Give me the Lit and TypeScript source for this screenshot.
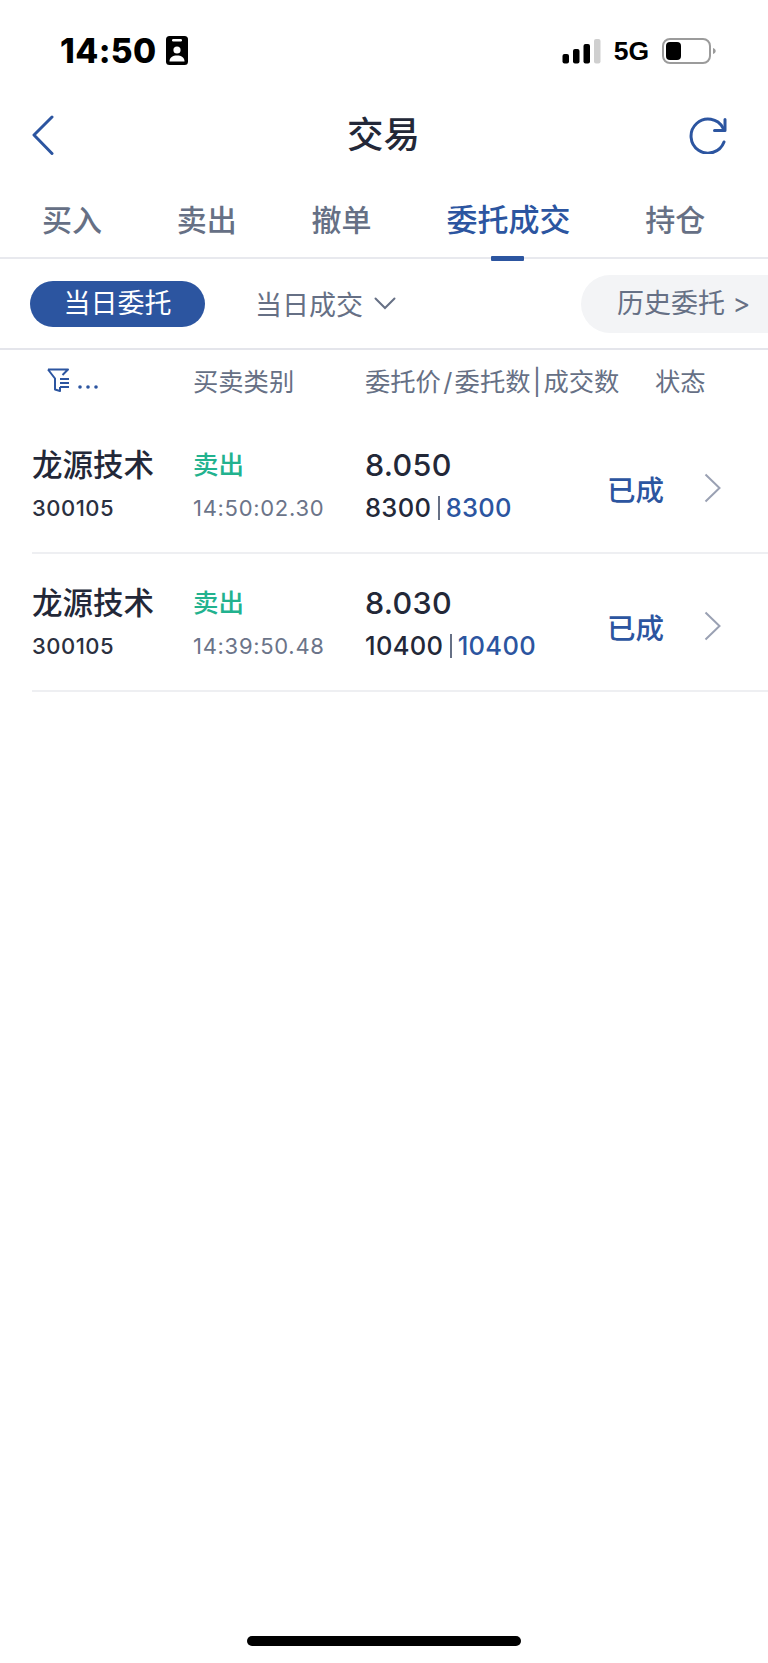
import { LitElement, html, css } from "lit";
import { customElement } from "lit/decorators.js";

const orders = [
  { name: "龙源技术", code: "300105", side: "卖出", time: "14:50:02.30", price: "8.050", qty: "8300", done: "8300", status: "已成" },
  { name: "龙源技术", code: "300105", side: "卖出", time: "14:39:50.48", price: "8.030", qty: "10400", done: "10400", status: "已成" },
];

@customElement("app-root")
export class AppRoot extends LitElement {
  static styles = css`
    :host {
      display: flex;
      flex-direction: column;
      width: 768px;
      height: 1663px;
      background: #fff;
      font-family: Inter, "Noto Sans CJK SC", sans-serif;
      color: #232838;
      overflow: hidden;
    }
    svg { display: block; flex: none; }
    .status {
      height: 100px;
      flex: none;
      box-sizing: border-box;
      padding: 36px 52px 0 60px;
      display: flex;
      align-items: flex-start;
      color: #000;
    }
    .clock { font-size: 33.5px; line-height: 30px; font-weight: 800; letter-spacing: 0.4px; width: 106px; }
    .status-right { margin-left: auto; display: flex; align-items: center; height: 30px; }
    .net { font-size: 26.5px; font-weight: 700; line-height: 30px; margin: 0 13px; font-family: "Liberation Sans", sans-serif; }
    .nav {
      height: 70px;
      flex: none;
      display: flex;
      align-items: center;
      justify-content: space-between;
      box-sizing: border-box;
      padding: 0 41px 0 32px;
    }
    .title {
      flex: 1;
      text-align: center;
      font-size: 36.5px;
      line-height: 50px;
      font-weight: 500;
      padding-left: 24px;
    }
    .tabs {
      flex: none;
      height: 89px;
      box-sizing: border-box;
      padding: 28px 0 0 42px;
      display: flex;
      gap: 74.8px;
      border-bottom: 2px solid #e8e9ee;
    }
    .tab {
      position: relative;
      font-size: 30px;
      line-height: 44px;
      font-weight: 500;
      color: #667085;
      white-space: nowrap;
      height: 61px;
    }
    .tab.active { color: #2c55a0; font-size: 31px; }
    .tab.active::after {
      content: "";
      position: absolute;
      left: 45px;
      bottom: -2px;
      width: 33px;
      height: 5px;
      background: #2c55a0;
      border-radius: 1px;
    }
    .filters {
      flex: none;
      height: 91px;
      box-sizing: border-box;
      padding-left: 30px;
      display: flex;
      align-items: center;
      border-bottom: 2px solid #e4e5eb;
    }
    .pill {
      width: 175px;
      height: 46px;
      border-radius: 23px;
      background: #2c55a0;
      color: #fff;
      font-size: 27px;
      line-height: 46px;
      text-align: center;
    }
    .drop {
      margin-left: 50px;
      font-size: 27px;
      color: #667085;
      display: flex;
      align-items: center;
      gap: 11px;
    }
    .history {
      margin-left: auto;
      width: 187px;
      height: 58px;
      border-radius: 29px 0 0 29px;
      background: #f3f4f6;
      color: #667085;
      font-size: 27px;
      line-height: 58px;
      box-sizing: border-box;
      padding-left: 36px;
      white-space: nowrap;
    }
    .head, .row {
      display: grid;
      grid-template-columns: 161px 172px 242px 1fr;
      margin-left: 32px;
    }
    .head {
      flex: none;
      height: 66px;
      box-sizing: border-box;
      padding-bottom: 6px;
      align-items: center;
      font-size: 25.3px;
      color: #667085;
      white-space: nowrap;
    }
    .head-filter { display: flex; align-items: center; gap: 8px; padding-left: 15px; color: #2c55a0; }
    .head-state { padding-left: 48px; }
    .row {
      flex: none;
      height: 138px;
      box-sizing: border-box;
      border-bottom: 2px solid #eeeff2;
      padding-top: 27px;
    }
    .row .first { line-height: 44px; height: 44px; }
    .row .second { line-height: 30px; margin-top: 6px; }
    .name { font-size: 30.5px; font-weight: 500; }
    .code { font-size: 22px; font-weight: 500; letter-spacing: 0.5px; color: #2b3040; }
    .side { font-size: 25.5px; color: #22b28e; font-weight: 500; }
    .time { font-size: 22px; color: #6b7489; letter-spacing: 0.7px; }
    .price { font-size: 30.5px; font-weight: 500; letter-spacing: 0.3px; }
    .qty { font-size: 25.5px; font-weight: 500; letter-spacing: 0.3px; display: flex; align-items: center; }
    .sep { width: 1.5px; height: 24px; background: #667085; margin: 0 6px 0 7px; }
    .done { color: #2c55a0; }
    .state {
      display: flex;
      align-items: center;
      justify-content: space-between;
      height: 90px;
      padding-right: 47px;
      font-size: 28.5px;
      font-weight: 500;
      color: #2c55a0;
    }
    .home {
      margin: auto auto 17px;
      width: 274px;
      height: 10px;
      border-radius: 5px;
      background: #000;
    }
  `;

  private chevronRight() {
    return html`<svg width="17" height="30" viewBox="0 0 17 30"><path d="M1.5 1.5 15.5 15 1.5 28.5" fill="none" stroke="#9aa1b3" stroke-width="2"/></svg>`;
  }

  render() {
    return html`
      <div class="status">
        <div class="clock">14:50</div>
        <svg width="22" height="29" viewBox="0 0 22 29">
          <rect width="22" height="29" rx="3.5" fill="#000"/>
          <rect x="6" y="3" width="10" height="2.5" rx="1.2" fill="#fff"/>
          <circle cx="11" cy="14" r="3.6" fill="#fff"/>
          <path d="M3.5 25.5c0-4.2 3.4-6 7.5-6s7.500 1.800 7.500 6z" fill="#fff"/>
        </svg>
        <div class="status-right">
          <svg width="39" height="25" viewBox="0 0 39 25">
            <rect x="0.500" y="15" width="6.500" height="9.500" rx="2" fill="#000"/>
            <rect x="11" y="10" width="6.500" height="14.500" rx="2" fill="#000"/>
            <rect x="21.500" y="5" width="6.500" height="19.500" rx="2" fill="#000"/>
            <rect x="32" y="0" width="6.500" height="24.500" rx="2" fill="#cfcfcf"/>
          </svg>
          <span class="net">5G</span>
          <svg width="54" height="26" viewBox="0 0 54 26">
            <rect x="1" y="1" width="47" height="24" rx="7" fill="none" stroke="#9b9b9b" stroke-width="2"/>
            <rect x="4" y="4" width="15" height="18" rx="4" fill="#000"/>
            <path d="M51 10c1.700.5 2.700 1.700 2.700 3s-1 2.500-2.700 3z" fill="#9b9b9b"/>
          </svg>
        </div>
      </div>
      <div class="nav">
        <svg width="22" height="40" viewBox="0 0 22 40"><path d="M20 2 2 20 20 38.500" fill="none" stroke="#2c55a0" stroke-width="3" stroke-linecap="round" stroke-linejoin="round"/></svg>
        <div class="title">交易</div>
        <svg width="38" height="38" viewBox="0 0 38 38">
          <path d="M35 26A17 17 0 1 1 34 12" fill="none" stroke="#2c55a0" stroke-width="3" stroke-linecap="round"/>
          <path d="M36 3.500V14.500H25.500" fill="none" stroke="#2c55a0" stroke-width="3" stroke-linecap="round" stroke-linejoin="round"/>
        </svg>
      </div>
      <div class="tabs">
        <div class="tab">买入</div>
        <div class="tab">卖出</div>
        <div class="tab">撤单</div>
        <div class="tab active">委托成交</div>
        <div class="tab">持仓</div>
      </div>
      <div class="filters">
        <div class="pill">当日委托</div>
        <div class="drop">当日成交
          <svg width="22" height="13" viewBox="0 0 22 13"><path d="M1.500 1.500 11 11 20.500 1.500" fill="none" stroke="#667085" stroke-width="2" stroke-linecap="round"/></svg>
        </div>
        <div class="history">历史委托 &gt;</div>
      </div>
      <div class="head">
        <div class="head-filter">
          <svg width="23" height="24" viewBox="0 0 23 24" fill="none" stroke="#2c55a0" stroke-width="2" stroke-linejoin="round">
            <path d="M1 1.500H21L15.500 7M1 1.500 8 10.500V21.500L13 23V19"/>
            <path d="M13 11h9M13 15h9M13 19h9" stroke-width="1.800"/>
          </svg>
          <svg width="20" height="4" viewBox="0 0 20 4" style="margin-top:14px" fill="#2c55a0"><circle cx="2" cy="2" r="1.800"/><circle cx="10" cy="2" r="1.800"/><circle cx="18" cy="2" r="1.800"/></svg>
        </div>
        <div>买卖类别</div>
        <div>委托价&#8202;/&#8202;委托数&#8202;|&#8202;成交数</div>
        <div class="head-state">状态</div>
      </div>
      ${orders.map(o => html`
        <div class="row">
          <div>
            <div class="first name">${o.name}</div>
            <div class="second code">${o.code}</div>
          </div>
          <div>
            <div class="first side">${o.side}</div>
            <div class="second time">${o.time}</div>
          </div>
          <div>
            <div class="first price">${o.price}</div>
            <div class="second qty">${o.qty}<span class="sep"></span><span class="done">${o.done}</span></div>
          </div>
          <div class="state">${o.status}${this.chevronRight()}</div>
        </div>
      `)}
      <div class="home"></div>
    `;
  }
}
